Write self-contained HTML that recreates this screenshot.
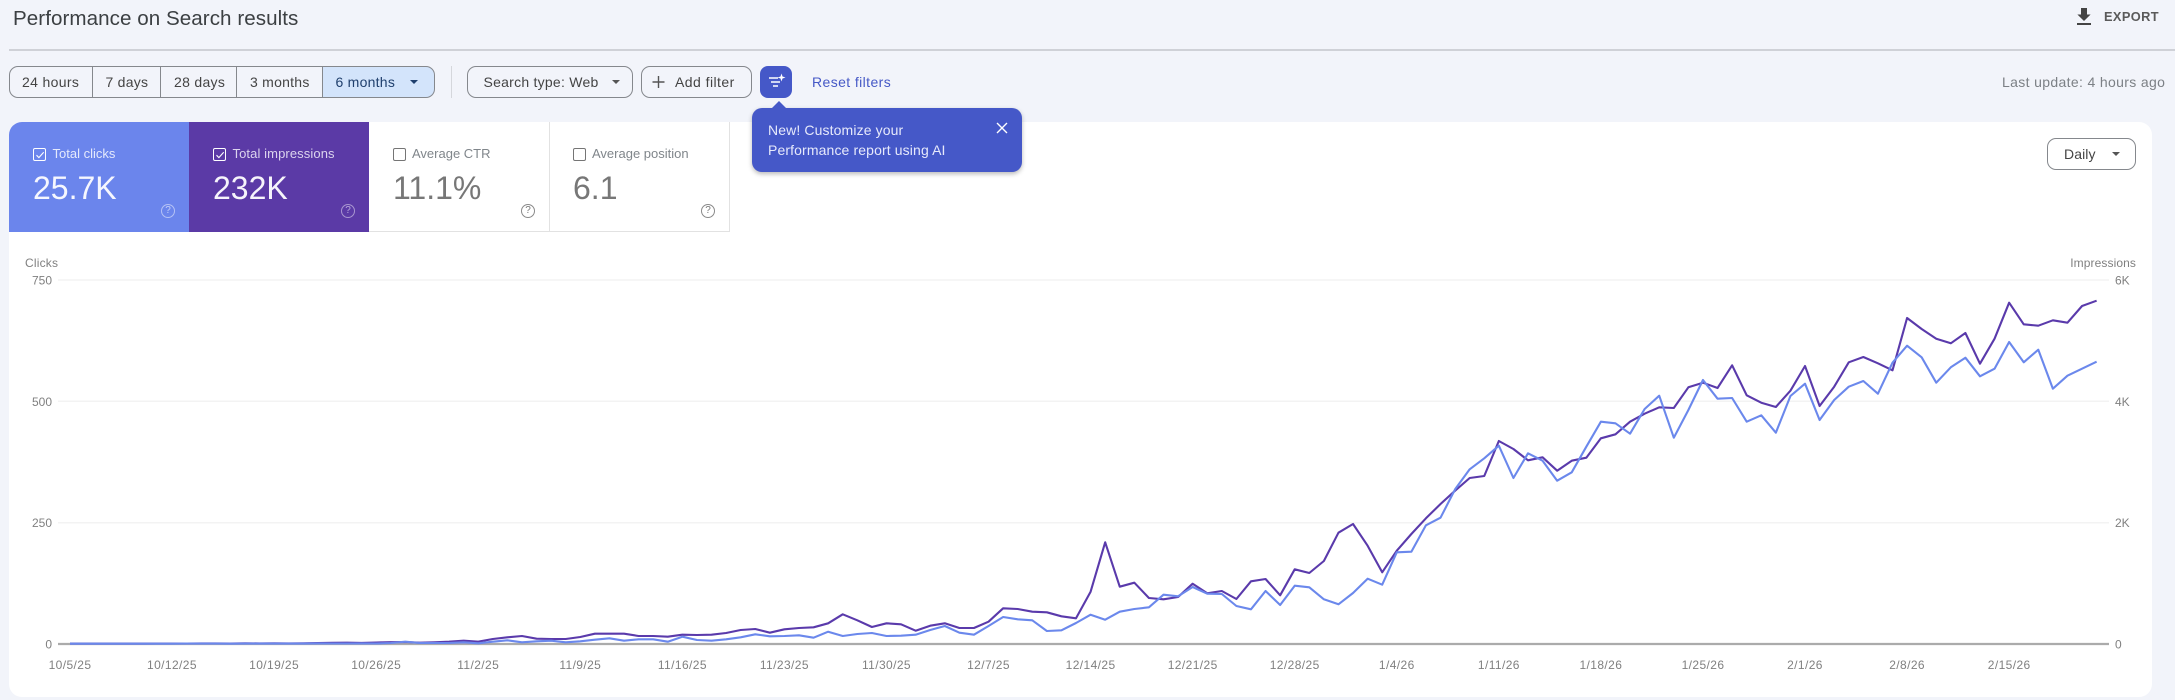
<!DOCTYPE html>
<html lang="en">
<head>
<meta charset="utf-8">
<title>Performance on Search results</title>
<style>
html,body{margin:0;padding:0;width:2175px;height:700px;overflow:hidden;background:#f2f4fa;font-family:"Liberation Sans",sans-serif;}
body{filter:blur(.3px);}
.a{position:absolute;white-space:nowrap;}
.t{position:absolute;white-space:nowrap;line-height:20px;height:20px;}
.seg{position:absolute;top:66px;height:32px;box-sizing:border-box;border:1px solid #85888d;}
.btn{position:absolute;top:66px;height:32px;box-sizing:border-box;border:1px solid #85888d;border-radius:9px;}
.car{position:absolute;width:0;height:0;border-left:4px solid transparent;border-right:4px solid transparent;border-top:4px solid #555;}
.lab{font-size:13px;}
.num{font-size:32px;line-height:36px;height:36px;}
.cb{position:absolute;width:11px;height:11px;border:1.2px solid #fff;border-radius:2px;top:148px;}
.cw{border-color:#757575;}
</style>
</head>
<body>
<div class="t" style="left:13px;top:8.5px;font-size:20.6px;color:#3c4043;letter-spacing:.05px;">Performance on Search results</div>
<svg class="a" style="left:2076px;top:7px" width="16" height="19" viewBox="0 0 16 19"><path d="M5 1h6v6.5h3.6L8 14 1.4 7.5H5z" fill="#444"/><rect x="1" y="16" width="14" height="2" fill="#444"/></svg>
<div class="t" style="left:2104px;top:7px;font-size:12.8px;font-weight:bold;color:#5a5a5a;letter-spacing:.4px;">EXPORT</div>
<div class="a" style="left:9px;top:49px;width:2166px;height:1.5px;background:#cfd1d7;"></div>

<div class="seg" style="left:9px;width:84px;border-radius:9px 0 0 9px;"></div>
<div class="seg" style="left:92px;width:69px;"></div>
<div class="seg" style="left:160px;width:77px;"></div>
<div class="seg" style="left:236px;width:87px;"></div>
<div class="seg" style="left:322px;width:113px;border-radius:0 9px 9px 0;background:#d3e4fb;"></div>
<div class="t" style="left:22px;top:72px;font-size:14px;color:#444;letter-spacing:.35px;">24 hours</div>
<div class="t" style="left:105.5px;top:72px;font-size:14px;color:#444;letter-spacing:.25px;">7 days</div>
<div class="t" style="left:174px;top:72px;font-size:14px;color:#444;letter-spacing:.3px;">28 days</div>
<div class="t" style="left:250px;top:72px;font-size:14px;color:#444;letter-spacing:.25px;">3 months</div>
<div class="t" style="left:335.5px;top:72px;font-size:14px;color:#1f3f6d;letter-spacing:.25px;">6 months</div>
<div class="car" style="left:410px;top:80px;border-top-color:#1f3f6d;"></div>
<div class="a" style="left:451px;top:66px;width:1px;height:32px;background:#d5d7dc;"></div>

<div class="btn" style="left:467px;width:166px;"></div>
<div class="t" style="left:483.5px;top:72px;font-size:14px;color:#444;letter-spacing:.25px;">Search type: Web</div>
<div class="car" style="left:612px;top:80px;"></div>
<div class="btn" style="left:641px;width:111px;"></div>
<svg class="a" style="left:652px;top:75px" width="13" height="14" viewBox="0 0 13 14"><path d="M6.5 1v12M.5 7h12" stroke="#555" stroke-width="1.4" fill="none"/></svg>
<div class="t" style="left:675px;top:72px;font-size:14px;color:#444;letter-spacing:.45px;">Add filter</div>

<div class="a" style="left:760px;top:66px;width:32px;height:32px;border-radius:8px;background:#4558c8;"></div>
<svg class="a" style="left:760px;top:66px" width="32" height="32" viewBox="0 0 32 32"><path d="M9 12h9M11 16h9M13 20h5" stroke="#fff" stroke-width="1.4" fill="none"/><path d="M21.5 7.5l1 3 3 1-3 1-1 3-1-3-3-1 3-1z" fill="#fff"/></svg>
<div class="t" style="left:812px;top:72px;font-size:14px;color:#4659c6;letter-spacing:.4px;">Reset filters</div>
<div class="t" style="left:2002px;top:72px;font-size:14px;color:#7c8085;letter-spacing:.35px;">Last update: 4 hours ago</div>

<!-- main card -->
<div class="a" style="left:9px;top:122px;width:2143px;height:575px;background:#fff;border-radius:13px;"></div>
<div class="a" style="left:9px;top:122px;width:180px;height:110px;background:#6b85ec;border-radius:13px 0 0 0;"></div>
<div class="a" style="left:189px;top:122px;width:180px;height:110px;background:#5b3aa6;"></div>
<div class="a" style="left:369px;top:231px;width:360px;height:1px;background:#e2e2e2;"></div>
<div class="a" style="left:549px;top:122px;width:1px;height:110px;background:#e2e2e2;"></div>
<div class="a" style="left:729px;top:122px;width:1px;height:110px;background:#e2e2e2;"></div>

<div class="cb" style="left:33px;"></div>
<svg class="a" style="left:33px;top:148px" width="14" height="14" viewBox="0 0 14 14"><path d="M3.5 7.2l2.4 2.4 4.8-5.4" stroke="#fff" stroke-width="1.1" fill="none"/></svg>
<div class="t lab" style="left:52.5px;top:144px;color:#e4e9fc;">Total clicks</div>
<div class="t num" style="left:33px;top:170px;color:#f6f7fe;">25.7K</div>

<div class="cb" style="left:213px;"></div>
<svg class="a" style="left:213px;top:148px" width="14" height="14" viewBox="0 0 14 14"><path d="M3.5 7.2l2.4 2.4 4.8-5.4" stroke="#fff" stroke-width="1.1" fill="none"/></svg>
<div class="t lab" style="left:232.5px;top:144px;color:#dcd4ee;letter-spacing:.1px;">Total impressions</div>
<div class="t num" style="left:213px;top:170px;color:#f6f4fb;">232K</div>

<div class="cb cw" style="left:393px;"></div>
<div class="t lab" style="left:412px;top:144px;color:#80868b;">Average CTR</div>
<div class="t num" style="left:393px;top:170px;color:#777;">11.1%</div>

<div class="cb cw" style="left:573px;"></div>
<div class="t lab" style="left:592px;top:144px;color:#80868b;">Average position</div>
<div class="t num" style="left:573px;top:170px;color:#777;">6.1</div>

<div class="a" style="left:161px;top:204px;width:12px;height:12px;border:1.2px solid #b5c2f5;border-radius:50%;color:#c5d0f7;font-size:10px;line-height:12px;text-align:center;">?</div>
<div class="a" style="left:341px;top:204px;width:12px;height:12px;border:1.2px solid #a996d0;border-radius:50%;color:#b9a9da;font-size:10px;line-height:12px;text-align:center;">?</div>
<div class="a" style="left:521px;top:204px;width:12px;height:12px;border:1.2px solid #8a8a8a;border-radius:50%;color:#777;font-size:10px;line-height:12px;text-align:center;">?</div>
<div class="a" style="left:701px;top:204px;width:12px;height:12px;border:1.2px solid #8a8a8a;border-radius:50%;color:#777;font-size:10px;line-height:12px;text-align:center;">?</div>

<!-- daily -->
<div class="a" style="left:2047px;top:138px;width:89px;height:32px;box-sizing:border-box;border:1px solid #85888d;border-radius:9px;"></div>
<div class="t" style="left:2064px;top:144px;font-size:14px;color:#444;letter-spacing:.1px;">Daily</div>
<div class="car" style="left:2112px;top:152px;"></div>

<!-- chart -->
<svg class="a" style="left:0;top:0" width="2175" height="700" viewBox="0 0 2175 700">
<g fill="none">
<path d="M58 280H2109M58 401.3H2109M58 522.7H2109" stroke="#f3f3f3" stroke-width="1.5"/>
<path d="M58 644H2109" stroke="#ababab" stroke-width="2.2"/>
<g transform="translate(70,0) scale(14.58,1)" stroke-linejoin="round">
<polyline vector-effect="non-scaling-stroke" stroke="#5a3aab" stroke-width="2.1" points="0,643.6 1,643.6 2,643.6 3,643.6 4,643.6 5,643.6 6,643.5 7,643.5 8,643.5 9,643.4 10,643.4 11,643.5 12,643.3 13,643.4 14,643.3 15,643.4 16,643.3 17,643 18,642.8 19,642.7 20,642.9 21,642.5 22,642.2 23,642 24,642.7 25,642.3 26,641.7 27,640.7 28,641.7 29,639 30,637.3 31,636 32,638.7 33,639 34,639 35,637 36,633.7 37,633.7 38,633.7 39,636 40,636 41,636.7 42,634.7 43,635 44,634.7 45,633 46,630 47,629 48,632.7 49,629.3 50,628 51,627.3 52,623.3 53,614.3 54,620.3 55,627 56,623.3 57,624.3 58,630.7 59,625.7 60,623.3 61,628 62,628 63,621.7 64,608.3 65,609 66,611.7 67,612.3 68,616.3 69,618.3 70,591.7 71,542.3 72,586.7 73,582.7 74,598 75,599.3 76,597 77,583.7 78,593.3 79,591 80,599 81,581.3 82,579 83,595.3 84,569.3 85,573 86,561 87,532.7 88,524 89,545.7 90,572.3 91,550.7 92,534 93,518.3 94,504 95,490.7 96,478 97,476 98,441 99,449 100,460.3 101,457.3 102,470.7 103,460.7 104,457.7 105,438.3 106,434.3 107,421.7 108,413.7 109,407.3 110,408 111,387.3 112,382.7 113,388 114,365.3 115,395.3 116,402.7 117,407 118,390.7 119,366 120,406 121,386.7 122,362.3 123,357 124,363.3 125,370.3 126,318 127,329 128,338.7 129,343.3 130,333 131,363.7 132,338.7 133,302.7 134,324.3 135,325.7 136,320.3 137,322.7 138,306 139,300.7"/>
<polyline vector-effect="non-scaling-stroke" stroke="#6b88ec" stroke-width="2.1" points="0,643.7 1,643.7 2,643.7 3,643.7 4,643.7 5,643.7 6,643.7 7,643.7 8,643.6 9,643.6 10,643.6 11,643.7 12,643.6 13,643.6 14,643.6 15,643.6 16,643.6 17,643.4 18,643.5 19,643.5 20,643.4 21,643.5 22,643 23,641.7 24,643 25,643 26,643 27,642.3 28,643.3 29,641.7 30,640.3 31,642.3 32,641.3 33,640.7 34,642.3 35,641.3 36,639.7 37,638.3 38,640.7 39,639.3 40,639.3 41,641.7 42,636.7 43,640 44,640.7 45,639.3 46,637.3 47,634.3 48,636.3 49,636 50,635.3 51,637.7 52,631.7 53,636 54,634 55,633 56,636 57,635.7 58,634.7 59,630 60,626 61,632.7 62,634.7 63,626 64,617 65,619.3 66,620.3 67,631 68,630.3 69,623 70,614.7 71,619.7 72,611.7 73,609 74,607.3 75,594.7 76,596.3 77,587 78,593.7 79,594 80,606 81,609.3 82,591 83,605 84,585.7 85,587.3 86,599.3 87,604.3 88,593 89,578.7 90,584.7 91,552.3 92,551.7 93,525.3 94,517.7 95,489.3 96,469.3 97,458.3 98,445.7 99,478 100,453.3 101,460.7 102,480.7 103,472.3 104,446.7 105,421.7 106,423.3 107,433.7 108,409 109,395.7 110,437.7 111,410 112,380 113,398.7 114,398 115,421.7 116,415.3 117,432.7 118,396 119,383.7 120,420 121,400 122,386.7 123,381 124,393.7 125,362.7 126,345.7 127,357.3 128,382.7 129,367.3 130,357.7 131,376.3 132,368.7 133,342 134,362.3 135,349.7 136,388.7 137,375.7 138,368.7 139,361.7"/>
</g>
</g>
<g font-family="'Liberation Sans',sans-serif" font-size="12" fill="#808080">
<text x="25" y="267" letter-spacing=".2">Clicks</text>
<text x="52" y="284.5" text-anchor="end">750</text>
<text x="52" y="406" text-anchor="end">500</text>
<text x="52" y="527" text-anchor="end">250</text>
<text x="52" y="648.5" text-anchor="end">0</text>
<text x="2136" y="267" text-anchor="end" letter-spacing=".1">Impressions</text>
<text x="2115" y="284.5">6K</text>
<text x="2115" y="406">4K</text>
<text x="2115" y="527">2K</text>
<text x="2115" y="648.5">0</text>
<g text-anchor="middle" letter-spacing=".4">
<text x="70" y="669">10/5/25</text>
<text x="172" y="669">10/12/25</text>
<text x="274.1" y="669">10/19/25</text>
<text x="376.2" y="669">10/26/25</text>
<text x="478.2" y="669">11/2/25</text>
<text x="580.3" y="669">11/9/25</text>
<text x="682.4" y="669">11/16/25</text>
<text x="784.4" y="669">11/23/25</text>
<text x="886.5" y="669">11/30/25</text>
<text x="988.5" y="669">12/7/25</text>
<text x="1090.6" y="669">12/14/25</text>
<text x="1192.7" y="669">12/21/25</text>
<text x="1294.7" y="669">12/28/25</text>
<text x="1396.8" y="669">1/4/26</text>
<text x="1498.9" y="669">1/11/26</text>
<text x="1600.9" y="669">1/18/26</text>
<text x="1703" y="669">1/25/26</text>
<text x="1805" y="669">2/1/26</text>
<text x="1907.1" y="669">2/8/26</text>
<text x="2009.2" y="669">2/15/26</text>
</g>
</g>
</svg>

<!-- tooltip -->
<div class="a" style="left:752px;top:108px;width:270px;height:64px;background:#4558c8;border-radius:10px;box-shadow:0 2px 5px rgba(0,0,0,.28);"></div>
<svg class="a" style="left:771px;top:100px" width="16" height="9" viewBox="0 0 16 9"><path d="M0 9L8 1l8 8z" fill="#4558c8"/></svg>
<div class="t" style="left:768px;top:120px;font-size:14px;color:#e6e9fb;letter-spacing:.12px;">New! Customize your</div>
<div class="t" style="left:768px;top:140px;font-size:14px;color:#e6e9fb;letter-spacing:.12px;">Performance report using AI</div>
<svg class="a" style="left:995px;top:121px" width="14" height="14" viewBox="0 0 14 14"><path d="M2 2l10 10M12 2L2 12" stroke="#fff" stroke-width="1.4" fill="none"/></svg>
</body>
</html>
